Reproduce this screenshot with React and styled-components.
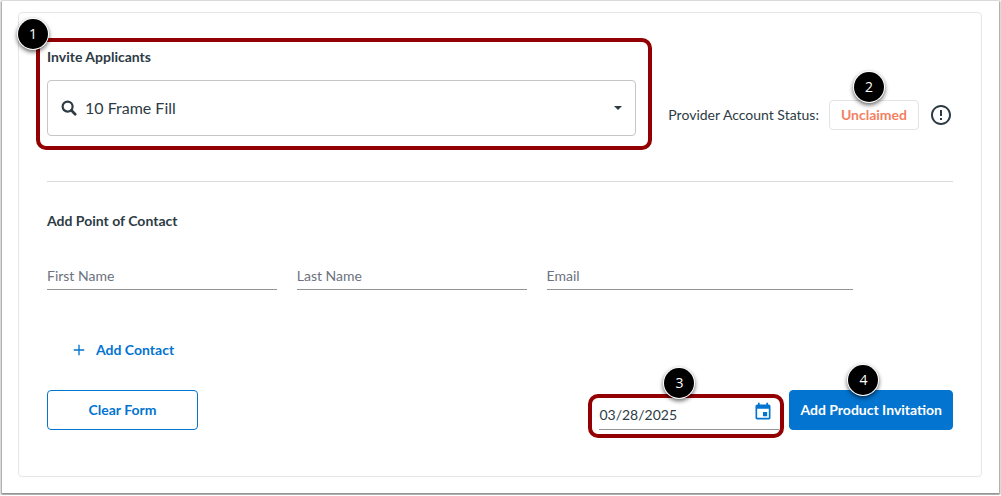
import React, { useState } from "react";
import styled, { createGlobalStyle } from "styled-components";

const GlobalStyle = createGlobalStyle`
  *, *::before, *::after { box-sizing: border-box; }
  body {
    margin: 0;
    background: #fff;
    color: #2d3b45;
    font: 400 14px/20px Lato, "Liberation Sans", sans-serif;
  }
  button, input { font: inherit; color: inherit; margin: 0; }
`;

const Frame = styled.main`
  margin: 1px 2px 2px;
  padding: 11px 17px 16px 16px;
  background: #fff;
  box-shadow: 0 1px 2px 1px rgba(0, 0, 0, 0.45);
`;

const Card = styled.form`
  padding: 34px 28px 46px;
  border: 1px solid #e4e6e8;
  border-radius: 4px;
`;

const TopRow = styled.div`
  display: flex;
  align-items: flex-end;
  justify-content: space-between;
  gap: 30px;
`;

const Marked = styled.div`
  position: relative;
  display: flex;
  flex-direction: column;
  flex: ${(p) => p.$flex || "none"};
`;

const Highlight = styled.span`
  position: absolute;
  inset: ${(p) => p.$inset};
  border: 4px solid #930003;
  border-radius: 10px;
  pointer-events: none;
`;

const Step = styled.span`
  position: absolute;
  top: ${(p) => p.$top};
  left: ${(p) => p.$left};
  width: 30px;
  height: 30px;
  border-radius: 50%;
  background: #000;
  color: #fff;
  font: 400 14px/30px "Open Sans", sans-serif;
  text-align: center;
  box-shadow: 0 0 0 1px #fff, 0 2px 4px 1px rgba(0, 0, 0, 0.6);
  pointer-events: none;
`;

const FieldLabel = styled.label`
  align-self: flex-start;
  margin-bottom: 13px;
  font-weight: 700;
`;

const SearchBox = styled.div`
  display: flex;
  align-items: center;
  height: 56px;
  padding: 0 5px 0 13px;
  border: 1px solid #c4c6c8;
  border-radius: 4px;
`;

const SearchInput = styled.input`
  flex: 1;
  min-width: 0;
  padding: 0 0 0 8px;
  border: 0;
  outline: 0;
  background: none;
  font-size: 16px;
`;

const IconButton = styled.button`
  display: flex;
  padding: 0;
  border: 0;
  background: none;
  color: ${(p) => p.$color || "inherit"};
  cursor: pointer;
`;

const Status = styled.div`
  display: flex;
  align-items: center;
  height: 30px;
  margin-bottom: 6px;
  white-space: nowrap;
`;

const StatusChip = styled.strong`
  position: relative;
  margin: 0 10px;
  padding: 4px 11px;
  border: 1px solid #e1e3e5;
  border-radius: 4px;
  color: #f47f63;
  font-weight: 700;
`;

const Divider = styled.hr`
  margin: 45px 0 29px;
  border: 0;
  border-top: 1px solid #d8dadc;
`;

const SectionTitle = styled.h2`
  margin: 0;
  font-size: 14px;
  line-height: 20px;
  font-weight: 700;
`;

const ContactRow = styled.div`
  display: grid;
  grid-template-columns: 3fr 3fr 4fr;
  gap: 20px;
  margin-top: 29px;
  padding-right: 100px;
`;

const LineInput = styled.input`
  width: 100%;
  min-width: 0;
  height: 30px;
  padding: 2px 0 0;
  border: 0;
  border-bottom: 1px solid #949494;
  border-radius: 0;
  outline: 0;
  background: none;

  &::placeholder { color: #6b7280; opacity: 1; }
`;

const Button = styled.button`
  height: 40px;
  padding: 0 10px;
  border: 1px solid ${(p) => (p.$variant === "text" ? "transparent" : "#0374cf")};
  border-radius: 4px;
  background: ${(p) => (p.$variant === "solid" ? "#0374cf" : "transparent")};
  color: ${(p) => (p.$variant === "solid" ? "#fff" : "#0374cf")};
  font-weight: 700;
  white-space: nowrap;
  cursor: pointer;
`;

const AddContact = styled(Button)`
  display: flex;
  align-items: center;
  gap: 8px;
  margin: 40px 0 20px 12px;
`;

const ClearButton = styled(Button)`
  min-width: 151px;
`;

const Actions = styled.div`
  display: flex;
  align-items: flex-end;
  justify-content: space-between;
`;

const Submission = styled.div`
  display: flex;
  align-items: flex-end;
  gap: 10px;
`;

const DateField = styled.div`
  display: flex;
  align-items: center;
  width: 180px;
  height: 36px;
  padding-right: 6px;
  border-bottom: 1px solid #949494;
`;

const DateInput = styled.input`
  flex: 1;
  min-width: 0;
  padding: 6px 0 0;
  border: 0;
  outline: 0;
  background: none;
`;

const Icon = ({ size, box = 24, children }) => (
  <svg width={size} height={size} viewBox={`0 0 ${box} ${box}`} fill="currentColor" aria-hidden="true">
    {children}
  </svg>
);

export default function App() {
  const [product, setProduct] = useState("10 Frame Fill");
  const [date, setDate] = useState("03/28/2025");

  return (
    <>
      <GlobalStyle />
      <Frame>
        <Card onSubmit={(e) => e.preventDefault()}>
          <TopRow>
            <Marked $flex="0 1 589px">
              <FieldLabel htmlFor="product">Invite Applicants</FieldLabel>
              <SearchBox>
                <Icon size={16} box={16}>
                  <circle cx="6.6" cy="6.6" r="5" fill="none" stroke="currentColor" strokeWidth="2.2" />
                  <path d="M10.3 10.3 14.2 14.2" stroke="currentColor" strokeWidth="2.7" strokeLinecap="round" />
                </Icon>
                <SearchInput id="product" value={product} onChange={(e) => setProduct(e.target.value)} />
                <IconButton type="button" aria-label="Show options">
                  <Icon size={24}><path d="M8 10h8l-4 4z" /></Icon>
                </IconButton>
              </SearchBox>
              <Highlight $inset="-9px -16px -14px -11px" />
              <Step $top="-28px" $left="-29px">1</Step>
            </Marked>
            <Status>
              Provider Account Status:
              <StatusChip>
                Unclaimed
                <Step $top="-29px" $left="24px">2</Step>
              </StatusChip>
              <IconButton type="button" aria-label="Status details">
                <Icon size={24}>
                  <path d="M11 15h2v2h-2zm0-8h2v6h-2zm.99-5C6.47 2 2 6.48 2 12s4.47 10 9.99 10C17.52 22 22 17.52 22 12S17.52 2 11.99 2M12 20c-4.42 0-8-3.58-8-8s3.58-8 8-8 8 3.58 8 8-3.58 8-8 8" />
                </Icon>
              </IconButton>
            </Status>
          </TopRow>

          <Divider />

          <SectionTitle>Add Point of Contact</SectionTitle>
          <ContactRow>
            <LineInput placeholder="First Name" aria-label="First Name" />
            <LineInput placeholder="Last Name" aria-label="Last Name" />
            <LineInput type="email" placeholder="Email" aria-label="Email" />
          </ContactRow>

          <AddContact type="button" $variant="text">
            <Icon size={18}><path d="M19 12.9h-6.1V19h-1.8v-6.1H5v-1.8h6.1V5h1.8v6.1H19z" /></Icon>
            Add Contact
          </AddContact>

          <Actions>
            <ClearButton type="reset">Clear Form</ClearButton>
            <Submission>
              <Marked>
                <DateField>
                  <DateInput aria-label="Invitation date" value={date} onChange={(e) => setDate(e.target.value)} />
                  <IconButton type="button" aria-label="Choose date" $color="#0374cf">
                    <Icon size={20}>
                      <path d="M19 3h-1V1h-2v2H8V1H6v2H5c-1.1 0-2 .9-2 2v14c0 1.1.9 2 2 2h14c1.1 0 2-.9 2-2V5c0-1.1-.9-2-2-2m0 16H5V8h14zm-7-7h5v5h-5z" />
                    </Icon>
                  </IconButton>
                </DateField>
                <Highlight $inset="0 -5px -8px -11px" />
                <Step $top="-26px" $left="65px">3</Step>
              </Marked>
              <Marked>
                <Button type="submit" $variant="solid">Add Product Invitation</Button>
                <Step $top="-25px" $left="59px">4</Step>
              </Marked>
            </Submission>
          </Actions>
        </Card>
      </Frame>
    </>
  );
}
